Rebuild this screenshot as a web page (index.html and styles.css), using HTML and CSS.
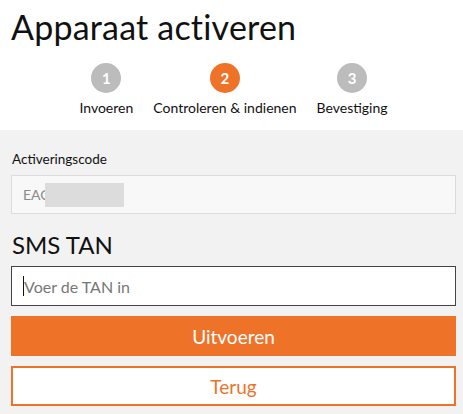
FILE: index.html
```html
<!DOCTYPE html>
<html lang="nl">
<head>
<meta charset="utf-8">
<title>Apparaat activeren</title>
<link rel="stylesheet" href="styles.css">
</head>
<body>
<header class="head">
  <h1 class="title">Apparaat activeren</h1>
  <ol class="steps">
    <li class="step"><span class="dot">1</span><span class="step-label">Invoeren</span></li>
    <li class="step step-active"><span class="dot">2</span><span class="step-label">Controleren &amp; indienen</span></li>
    <li class="step"><span class="dot">3</span><span class="step-label">Bevestiging</span></li>
  </ol>
</header>
<main class="panel">
  <label class="field-label">Activeringscode</label>
  <div class="readonly"><span class="code">EAC</span><span class="redact"></span></div>
  <h2 class="tan-title">SMS TAN</h2>
  <div class="tan-input"><span class="caret"></span><span class="placeholder">Voer de TAN in</span></div>
  <button class="btn btn-primary" type="button">Uitvoeren</button>
  <button class="btn btn-secondary" type="button">Terug</button>
</main>
</body>
</html>
```

FILE: styles.css
```css
* { box-sizing: border-box; }
html, body { margin: 0; padding: 0; }
body {
  width: 463px;
  height: 414px;
  overflow: hidden;
  background: #ffffff;
  font-family: Lato, "Noto Sans", "Liberation Sans", sans-serif;
  color: #111;
}
.head {
  height: 130px;
  padding: 0 7px 0 11px;
}
.title {
  margin: 0;
  padding-top: 7px;
  font-weight: 400;
  font-size: 34px;
  line-height: 40px;
  letter-spacing: 0.2px;
  color: #111;
}
.steps {
  list-style: none;
  margin: 16px 0 0;
  padding: 0;
  display: flex;
  justify-content: center;
  gap: 20px;
}
.step {
  display: flex;
  flex-direction: column;
  align-items: center;
}
.dot {
  width: 30px;
  height: 30px;
  border-radius: 50%;
  background: #bcbcbc;
  color: #fff;
  font-weight: 700;
  font-size: 15px;
  display: flex;
  align-items: center;
  justify-content: center;
}
.step-active .dot { background: #ee7329; }
.step-label {
  margin-top: 7px;
  font-size: 14px;
  line-height: 16px;
  color: #111;
  white-space: nowrap;
}
.panel {
  background: #f2f2f2;
  height: 284px;
  padding: 20px 7px 0 11px;
  display: flex;
  flex-direction: column;
}
.field-label {
  font-size: 13.5px;
  line-height: 18px;
  color: #111;
  padding-left: 1px;
}
.readonly {
  margin-top: 7px;
  height: 39px;
  border: 1px solid #dcdcdc;
  background: #f8f8f8;
  display: flex;
  align-items: center;
  padding-left: 11px;
}
.code {
  font-size: 14px;
  color: #8a8a8a;
  white-space: nowrap;
}
.redact {
  position: relative;
  width: 79px;
  height: 24px;
  margin-left: -5px;
  background: #dcdcdc;
}
.tan-title {
  margin: 16px 0 0;
  font-weight: 400;
  font-size: 24px;
  line-height: 30px;
  color: #111;
  padding-left: 1px;
}
.tan-input {
  margin-top: 6px;
  height: 40px;
  border: 1.5px solid #444;
  background: #fff;
  display: flex;
  align-items: center;
  padding-left: 11px;
}
.caret {
  width: 1px;
  height: 20px;
  background: #111;
}
.placeholder {
  font-size: 16px;
  color: #777;
}
.btn {
  height: 40px;
  font-family: inherit;
  font-size: 19px;
  cursor: pointer;
  margin: 0;
}
.btn-primary {
  margin-top: 10px;
  border: 0;
  background: #ee7329;
  color: #fff;
}
.btn-secondary {
  margin-top: 10px;
  border: 2px solid #ee7329;
  background: #fff;
  color: #ee7329;
}
```
